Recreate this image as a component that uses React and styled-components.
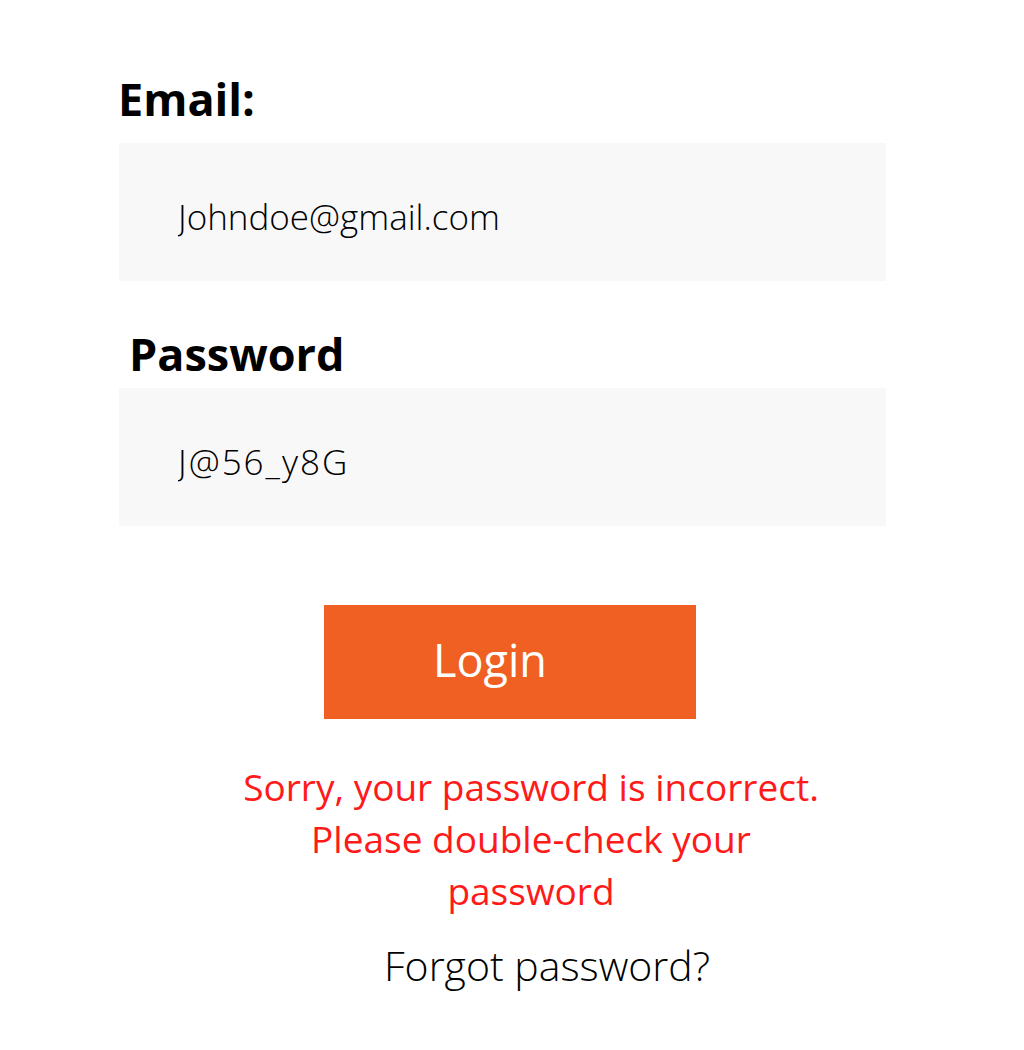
import React from 'react';
import styled, { createGlobalStyle } from 'styled-components';

const GlobalStyle = createGlobalStyle`
  body {
    margin: 0;
    background: #ffffff;
    font-family: 'Open Sans', 'Liberation Sans', sans-serif;
  }
`;

const StyledPage = styled.main`
  display: flex;
  flex-direction: column;
  align-items: flex-start;
  padding: 72px 0 40px 119px;
  width: 767px;
`;

const Label = styled.label`
  display: block;
  margin: ${({ top }) => top}px 0 0 ${({ indent }) => indent}px;
  color: #000;
  font-size: 45px;
  font-weight: 700;
  line-height: 53px;
`;

const Field = styled.input`
  box-sizing: border-box;
  width: 767px;
  height: 138px;
  margin-top: ${({ top }) => top}px;
  padding: 8px 0 0 59px;
  border: none;
  outline: none;
  background: #f8f8f8;
  color: #000;
  font-family: 'Open Sans', 'Liberation Sans', sans-serif;
  font-size: 35px;
  font-weight: 300;
  letter-spacing: ${({ spacing }) => spacing || 0}px;
`;

const LoginButton = styled.button`
  box-sizing: border-box;
  width: 372px;
  height: 114px;
  margin: 79px 0 0 205px;
  padding: 0 0 6px 109px;
  border: none;
  background: #f06022;
  color: #fff;
  text-align: left;
  font-family: 'Open Sans', 'Liberation Sans', sans-serif;
  font-size: 45px;
  font-weight: 400;
  cursor: pointer;
`;

const ErrorText = styled.p`
  width: 596px;
  margin: 42px 0 0 114px;
  color: #ff1a1a;
  text-align: center;
  font-size: 37px;
  font-weight: 400;
  line-height: 52px;
`;

const ForgotLink = styled.a`
  margin: 20px 0 0 265px;
  color: #000;
  font-size: 41px;
  font-weight: 300;
  text-decoration: none;
  cursor: pointer;
`;

const App = () => (
  <>
    <GlobalStyle />
    <StyledPage>
      <Label top={0} indent={-1}>Email:</Label>
      <Field top={18} type="text" defaultValue="Johndoe@gmail.com" />
      <Label top={46} indent={10}>Password</Label>
      <Field top={8} spacing={2} type="text" defaultValue="J@56_y8G" />
      <LoginButton>Login</LoginButton>
      <ErrorText>Sorry, your password is incorrect. Please double-check your password</ErrorText>
      <ForgotLink>Forgot password?</ForgotLink>
    </StyledPage>
  </>
);

export default App;
